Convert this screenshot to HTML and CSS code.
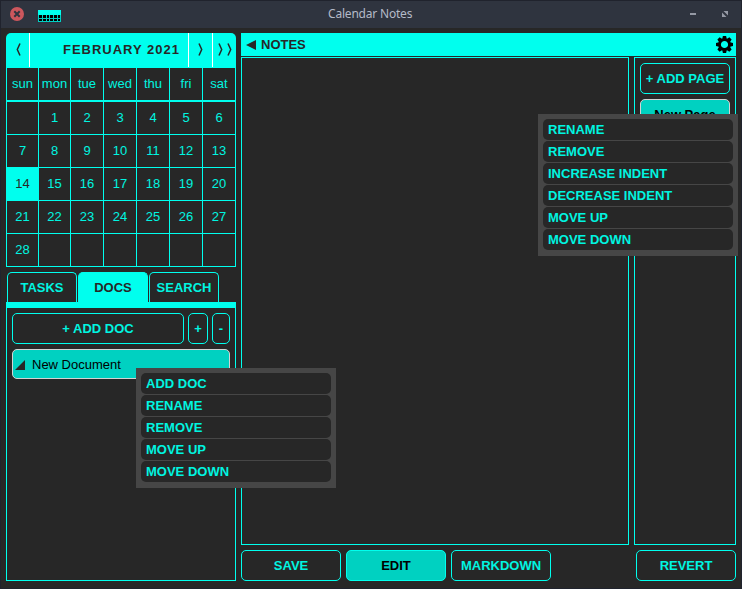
FILE: index.html
```html
<!DOCTYPE html>
<html lang="en">
<head>
<meta charset="utf-8">
<title>Calendar Notes</title>
<link rel="stylesheet" href="styles.css">
</head>
<body>
<div class="window">
  <header class="titlebar">
    <svg class="close" width="14" height="14" viewBox="0 0 14 14"><circle cx="7" cy="7" r="7" fill="#cc575d"/><path d="M4.3 4.3l5.4 5.4M9.7 4.3l-5.4 5.4" stroke="#2f343f" stroke-width="2"/></svg>
    <svg class="app-icon" width="23" height="12" viewBox="0 0 23 12" shape-rendering="crispEdges"><path fill="#00ffee" d="M0 0h23v5H0z"/><path fill="#000" d="M0 5h23v7H0z"/><path d="M.5 5v7M4.5 5v7M8.5 5v7M11.5 5v7M15.5 5v7M19.5 5v7M22.5 5v7M0 8.5h23M0 11.5h23" stroke="#00cfc4" fill="none"/></svg>
    <span class="title">Calendar Notes</span>
    <svg class="minimize" width="6" height="2"><path fill="#9599a4" d="M0 0h6v2H0z"/></svg>
    <svg class="restore" width="6" height="6" viewBox="0 0 6 6"><path fill="#9599a4" d="M1.5 0H6v4.5zM0 1.5L4.5 6H0z"/></svg>
  </header>
  <main class="content">
    <aside class="sidebar">
      <section class="calendar">
        <div class="cal-head">
          <span class="nav prev"><svg width="5" height="13" viewBox="0 0 5 13"><path d="M4 .5L1.3 6.5 4 12.5"/></svg></span>
          <span class="month">FEBRUARY 2021</span>
          <span class="nav next"><svg width="5" height="13" viewBox="0 0 5 13"><path d="M1 .5L3.7 6.5 1 12.5"/></svg></span>
          <span class="nav last"><svg width="5" height="13" viewBox="0 0 5 13"><path d="M1 .5L3.7 6.5 1 12.5"/></svg><svg width="5" height="13" viewBox="0 0 5 13"><path d="M1 .5L3.7 6.5 1 12.5"/></svg></span>
        </div>
        <div class="days names"><span>sun</span><span>mon</span><span>tue</span><span>wed</span><span>thu</span><span>fri</span><span>sat</span></div>
        <div class="days">
          <span></span><span>1</span><span>2</span><span>3</span><span>4</span><span>5</span><span>6</span>
          <span>7</span><span>8</span><span>9</span><span>10</span><span>11</span><span>12</span><span>13</span>
          <span class="today">14</span><span>15</span><span>16</span><span>17</span><span>18</span><span>19</span><span>20</span>
          <span>21</span><span>22</span><span>23</span><span>24</span><span>25</span><span>26</span><span>27</span>
          <span>28</span><span></span><span></span><span></span><span></span><span></span><span></span>
        </div>
      </section>
      <nav class="tabs"><span class="tab">TASKS</span><span class="tab active">DOCS</span><span class="tab">SEARCH</span></nav>
      <section class="docs">
        <div class="doc-actions"><span class="btn add">+ ADD DOC</span><span class="btn plus">+</span><span class="btn minus">-</span></div>
        <div class="item doc"><svg width="10" height="10"><path fill="#272727" d="M10 0v10H0z"/></svg><span>New Document</span></div>
      </section>
    </aside>
    <section class="notes">
      <div class="notes-head">
        <svg width="10" height="10" viewBox="0 0 10 10"><path fill="#272727" d="M10 0v10L0 5z"/></svg>
        <span>NOTES</span>
        <svg class="gear" width="17" height="17" viewBox="-8.5 -8.5 17 17"><g fill="#000"><path id="tooth" d="M-1.6-8.5h3.2l.9 4h-5z"/><use href="#tooth" transform="rotate(45)"/><use href="#tooth" transform="rotate(90)"/><use href="#tooth" transform="rotate(135)"/><use href="#tooth" transform="rotate(180)"/><use href="#tooth" transform="rotate(225)"/><use href="#tooth" transform="rotate(270)"/><use href="#tooth" transform="rotate(315)"/></g><circle r="4.9" fill="var(--cyan)" stroke="#000" stroke-width="2.6"/></svg>
      </div>
      <div class="panes">
        <div class="editor"></div>
        <div class="pages"><span class="btn">+ ADD PAGE</span><span class="item page">New Page</span></div>
      </div>
      <div class="actions"><span class="btn">SAVE</span><span class="btn selected">EDIT</span><span class="btn">MARKDOWN</span><span class="btn revert">REVERT</span></div>
    </section>
  </main>
  <div class="menu doc-menu"><span>ADD DOC</span><span>RENAME</span><span>REMOVE</span><span>MOVE UP</span><span>MOVE DOWN</span></div>
  <div class="menu page-menu"><span>RENAME</span><span>REMOVE</span><span>INCREASE INDENT</span><span>DECREASE INDENT</span><span>MOVE UP</span><span>MOVE DOWN</span></div>
</div>
</body>
</html>
```
FILE: styles.css
```css
:root { --cyan: #00ffee; --text: #00f5e0; --teal: #00d1c1; --dark: #272727; }
* { box-sizing: border-box; }
body { margin: 0; background: #1f222b; font: 13px/15px "Liberation Sans", Arial, sans-serif; color: var(--text); }
.window { position: relative; width: 742px; height: 589px; border: solid #20232d; border-width: 0 1px 1px; background: var(--dark); overflow: hidden; }
.titlebar { height: 28px; background: #2f343f; border-top: 1px solid #20232d; display: flex; align-items: center; padding: 0 13px 1px 9px; }
.app-icon { margin: 4px 0 0 14px; }
.title { flex: 1; padding-left: 267px; font: 12px/16px "Noto Sans", sans-serif; letter-spacing: -0.2px; color: #b4bac8; }
.minimize { margin-right: 26px; }

.content { display: flex; gap: 5px; padding: 5px; height: 560px; }
.sidebar { width: 230px; display: flex; flex-direction: column; height: 548px; }
.cal-head { height: 35px; display: flex; background: var(--cyan); color: var(--dark); border-radius: 5px 5px 0 0; padding-bottom: 1px; }
.cal-head .nav { display: flex; align-items: center; justify-content: center; gap: 4px; padding-bottom: 1px; }
.nav path { fill: none; stroke: var(--dark); stroke-width: 1.5; }
.cal-head .prev { width: 24px; border-right: 1px solid #fff; padding-left: 1px; }
.next { width: 24px; border-left: 1px solid #fff; }
.last { width: 24px; border-left: 1px solid #fff; }
.month { flex: 1; display: flex; align-items: center; justify-content: flex-end; padding: 0 8px 1px 0; font-weight: bold; letter-spacing: 1px; }
.days { display: grid; grid-template-columns: 32px 32px 33px 33px 33px 33px 33px; grid-auto-rows: 33px; border-left: 1px solid var(--cyan); }
.days span { display: flex; align-items: center; justify-content: center; border: solid var(--cyan); border-width: 0 1px 1px 0; padding-bottom: 2px; }
.days.names { border-bottom: 1px solid var(--cyan); }
.days .today { background: var(--cyan); color: var(--dark); }

.tabs { display: flex; gap: 1px; margin: 5px 0 0 1px; height: 30px; }
.tab { width: 70px; border: 1px solid var(--cyan); border-bottom: 0; border-radius: 5px 5px 0 0; display: flex; align-items: center; justify-content: center; font-weight: bold; }
.tab.active { background: var(--cyan); color: var(--dark); }
.docs { flex: 1; border: 1px solid var(--cyan); border-top-width: 6px; padding: 5px; }
.doc-actions { display: flex; gap: 4px; margin-bottom: 5px; }
.btn { height: 31px; border: 1px solid var(--cyan); border-radius: 5px; display: flex; align-items: center; justify-content: center; font-weight: bold; }
.add { flex: 1; }
.plus { width: 20px; }
.minus { width: 18px; }
.item { height: 30px; display: flex; align-items: center; border: 1px solid #d3d3d3; border-radius: 5px; background: var(--teal); color: #000; }
.doc { padding-left: 2px; gap: 7px; }
.doc svg { margin-top: 1px; }

.notes { width: 495px; }
.notes-head { height: 23px; background: var(--cyan); color: var(--dark); font-weight: bold; display: flex; align-items: center; gap: 5px; padding: 0 3px 0 5px; }
.gear { margin-left: auto; }
.panes { display: flex; gap: 5px; margin-top: 1px; height: 488px; }
.editor { flex: 1; border: 1px solid var(--cyan); }
.pages { width: 102px; border: 1px solid var(--cyan); padding: 5px; display: flex; flex-direction: column; gap: 5px; }
.page { justify-content: center; font-weight: bold; }
.actions { display: flex; gap: 5px; margin-top: 5px; }
.actions .btn { width: 100px; }
.selected { background: var(--teal); color: #000; }
.actions .revert { margin-left: auto; }

.menu { position: absolute; width: 200px; background: #464646; padding: 5px; display: flex; flex-direction: column; gap: 1px; font-weight: bold; }
.menu span { height: 21px; line-height: 21px; padding-left: 5px; border-radius: 5px; background: var(--dark); }
.doc-menu { left: 135px; top: 368px; height: 120px; }
.page-menu { left: 537px; top: 114px; height: 142px; }
```
